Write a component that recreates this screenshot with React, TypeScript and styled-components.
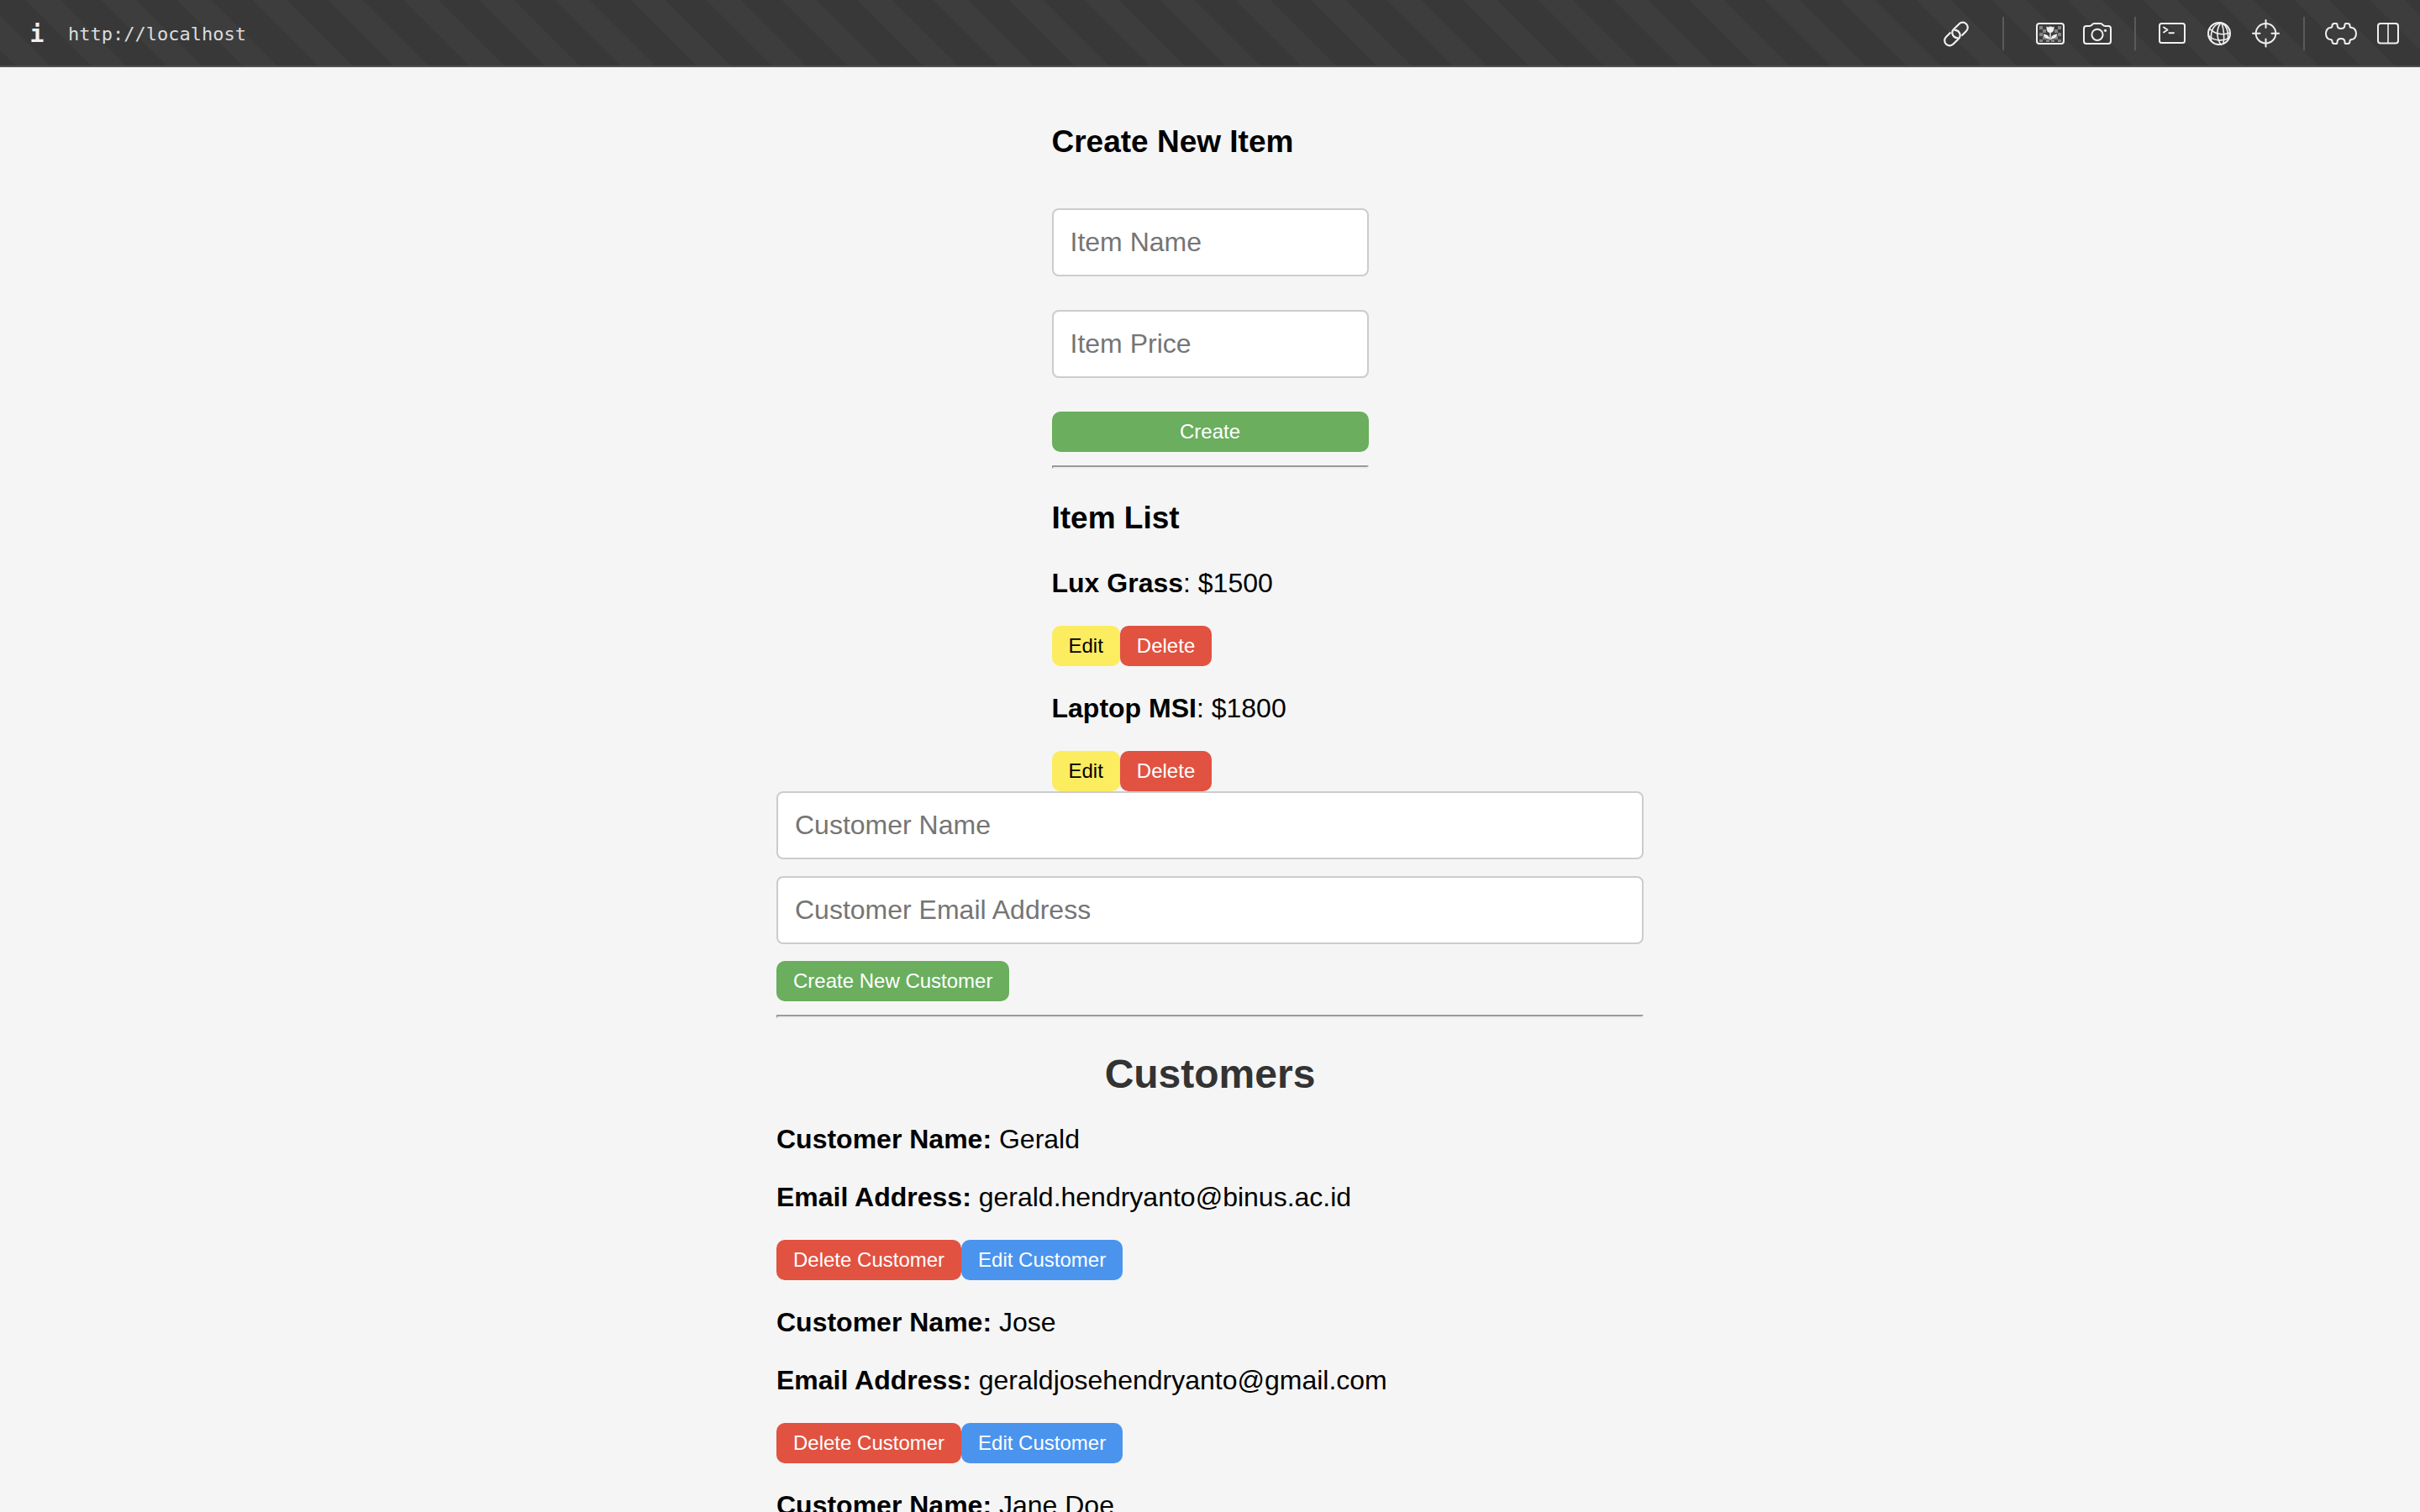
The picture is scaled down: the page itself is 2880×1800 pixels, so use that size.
import React from "react";
import styled, { createGlobalStyle } from "styled-components";

const GlobalStyle = createGlobalStyle`
  *, *::before, *::after { box-sizing: border-box; }
  body {
    margin: 0;
    background: #f5f5f5;
    color: #000;
    font-family: "Liberation Sans", Arial, Helvetica, sans-serif;
    font-size: 32px;
    line-height: 37px;
  }
`;

const Shell = styled.div`
  display: flex;
  flex-direction: column;
  height: 100vh;
  overflow: hidden;
`;

const Toolbar = styled.header`
  display: flex;
  align-items: center;
  flex: none;
  height: 80px;
  padding: 0 10px 0 16px;
  background-color: #383838;
  background-image: linear-gradient(
    45deg,
    #383838 16.67%,
    #3d3d3d 16.67% 40%,
    #383838 40% 66.67%,
    #3d3d3d 66.67% 90%,
    #383838 90%
  );
  background-size: 90px 90px;
  box-shadow: inset 0 -2px #4f4f4f;
`;

const ToolButton = styled.button`
  display: flex;
  align-items: center;
  justify-content: center;
  width: 56px;
  height: 56px;
  padding: 0;
  border: 0;
  background: none;
  color: #f0f0f0;
`;

const InfoButton = styled(ToolButton)`
  font: bold 28px "DejaVu Sans Mono", monospace;
`;

const Address = styled.input`
  flex: 1;
  min-width: 0;
  margin-left: 9px;
  padding: 0;
  border: 0;
  outline: 0;
  background: none;
  color: #dcdcdc;
  font: 22px "DejaVu Sans Mono", monospace;
`;

const Divider = styled.span<{ $wide?: boolean }>`
  width: 2px;
  height: 40px;
  margin: ${(p) => (p.$wide ? "0 27px" : "0 15px 0 16px")};
  background: #5a5a5a;
`;

const Icon = styled.svg.attrs({ viewBox: "0 0 40 40", "aria-hidden": true })`
  width: 40px;
  height: 40px;
  fill: none;
  stroke: currentColor;
  stroke-width: 2;
  stroke-linecap: round;
  stroke-linejoin: round;
`;

const Main = styled.main`
  display: flex;
  flex-direction: column;
  align-items: center;
  flex: 1;
  min-height: 0;
  padding-top: 30px;
  overflow: hidden;
`;

const Items = styled.section`
  flex: none;
  width: 377px;
`;

const Customers = styled.section`
  flex: none;
  width: 100%;
  max-width: 1032px;
`;

const Heading = styled.h3`
  margin: 37px 0 38px;
  font-size: 37px;
  line-height: 43px;
`;

const Title = styled.h1`
  margin: 40px 0 32px;
  color: #333;
  font-size: 48px;
  line-height: 54px;
  text-align: center;
`;

const Form = styled.form<{ $gap: number }>`
  display: flex;
  flex-direction: column;
  align-items: flex-start;
  gap: ${(p) => p.$gap}px;
`;

const ItemForm = styled(Form)`
  align-items: stretch;
  padding-top: 20px;
`;

const Field = styled.input`
  width: 100%;
  padding: 20px;
  border: 2px solid #ccc;
  border-radius: 8px;
  background: #fff;
  color: #000;
  font: inherit;
  line-height: 37px;

  &::placeholder { color: #757575; }
`;

const tones = {
  green: ["#6aae5e", "#fff"],
  yellow: ["#fcec60", "#000"],
  red: ["#e15241", "#fff"],
  blue: ["#4a94ee", "#fff"],
};

const Button = styled.button<{ $tone: keyof typeof tones }>`
  padding: 10px 20px;
  border: 0;
  border-radius: 10px;
  background: ${(p) => tones[p.$tone][0]};
  color: ${(p) => tones[p.$tone][1]};
  font-family: inherit;
  font-size: 24px;
  line-height: 28px;
`;

const Rule = styled.hr`
  margin: 16px 0 0;
  border: 2px inset #eee;
`;

const Line = styled.p`
  margin: 32px 0;
`;

const Actions = styled.div`
  display: flex;
`;

const LinkIcon = () => (
  <Icon>
    <g transform="translate(20 20.5) rotate(-45)" strokeWidth="2.2" strokeLinecap="butt">
      <path d="M-3.2-6H-11a6 6 0 0 0 0 12H-2A6 6 0 0 0 1.600-4.800" />
      <path d="M3.2 6H11a6 6 0 0 0 0-12H2A6 6 0 0 0-1.600 4.800" />
    </g>
  </Icon>
);

const checks = [
  [7, 11], [11, 15], [7, 19], [11, 23], [7, 27], [15, 27],
  [29, 11], [25, 15], [29, 19], [25, 23], [29, 27], [21, 27],
];

const PictureIcon = () => (
  <Icon>
    <rect x="4" y="8" width="32" height="24" rx="3" />
    <g fill="#858585" stroke="none">
      {checks.map(([x, y]) => (
        <rect key={`${x}-${y}`} x={x} y={y} width="4" height={y === 27 ? 3 : 4} />
      ))}
    </g>
    <g fill="currentColor" stroke="none">
      <path d="M15.500 11.500l2.500 1 .8-1.300h.6l.6 1.200.6-1.200h.6l.8 1.300 2.500-1c.2 4.500-1 7.500-4.500 7.500s-4.700-3-4.500-7.500z" />
      <path d="M19.300 18h1.400v9.400h-1.400z" />
      <path d="M11.600 20.600c4 .2 7 2 7.800 5.800-4 .4-7-1.600-7.800-5.800z" />
      <path d="M28.400 20.600c-4 .2-7 2-7.800 5.800 4 .4 7-1.600 7.800-5.800z" />
    </g>
  </Icon>
);

const CameraIcon = () => (
  <Icon>
    <path d="M4 14a3 3 0 0 1 3-3h3.500c1.500 0 2.300-.4 3-1.400S15 8 16.500 8h7c1.500 0 2.300.6 3 1.600s1.500 1.400 3 1.400H33a3 3 0 0 1 3 3v15a3 3 0 0 1-3 3H7a3 3 0 0 1-3-3z" />
    <circle cx="20" cy="21.300" r="6.600" />
    <circle cx="29.500" cy="16.300" r="1.600" fill="currentColor" stroke="none" />
  </Icon>
);

const TerminalIcon = () => (
  <Icon>
    <rect x="5" y="8" width="30" height="23" rx="2.500" />
    <path d="M10 12.500l4.500 3-4.500 3M16.500 19.300h5.500" />
  </Icon>
);

const GlobeIcon = () => (
  <Icon>
    <circle cx="20" cy="20" r="13" />
    <g strokeWidth="1.600">
      <path d="M22 7.200C14 9 9.500 16 10.500 28" />
      <path d="M22 7.200C16.500 14 16.500 25 22 33" />
      <path d="M23 7.200C25.500 15 26.500 23 25 32" />
      <path d="M24 8C28 10 31.500 17 30.500 26" />
      <path d="M9 14.500c6 6 15 8 24 4.500" />
      <path d="M7.500 22.500c6 6 16 7 24 3" />
    </g>
  </Icon>
);

const TargetIcon = () => (
  <Icon>
    <circle cx="19.500" cy="19.700" r="11.800" />
    <path d="M19.500 4v9M19.500 26.500v9M4 19.700h8.500M26.500 19.700H35" />
  </Icon>
);

const PuzzleIcon = () => (
  <Icon>
    <path d="M12 8h2.300c1 0 1.200.8 1.200 1.800 0 2.700 1.500 4.200 4.500 4.200s4.500-1.500 4.500-4.200c0-1 .2-1.800 1.200-1.800H28c1.700 0 2.500 1.200 2.500 2.700S31.500 13 33 13c3.200 0 5 4 5 7s-1.800 7-5 7c-1.500 0-2.500.8-2.500 2.300S29.700 32 28 32h-2.300c-1 0-1.200-.8-1.200-1.800 0-2.700-1.500-4.200-4.500-4.200s-4.500 1.500-4.500 4.200c0 1-.2 1.800-1.200 1.800H12c-1.700 0-2.500-1.200-2.500-2.700S8.500 27 7 27c-3.200 0-5-4-5-7s1.800-7 5-7c1.500 0 2.500-.8 2.500-2.300S10.300 8 12 8z" />
  </Icon>
);

const SplitIcon = () => (
  <Icon>
    <rect x="8" y="8" width="24" height="23.500" rx="3" />
    <path d="M20 8v23.500" strokeWidth="1.600" />
  </Icon>
);

const items = [
  { name: "Lux Grass", price: 1500 },
  { name: "Laptop MSI", price: 1800 },
];

const customers = [
  { name: "Gerald", email: "gerald.hendryanto@binus.ac.id" },
  { name: "Jose", email: "geraldjosehendryanto@gmail.com" },
  { name: "Jane Doe", email: "" },
];

export default function App() {
  return (
    <Shell>
      <GlobalStyle />
      <Toolbar>
        <InfoButton type="button" aria-label="Site information">i</InfoButton>
        <Address aria-label="Address" defaultValue="http://localhost" spellCheck={false} />
        <ToolButton type="button" aria-label="Copy link"><LinkIcon /></ToolButton>
        <Divider $wide />
        <ToolButton type="button" aria-label="Pictures"><PictureIcon /></ToolButton>
        <ToolButton type="button" aria-label="Capture"><CameraIcon /></ToolButton>
        <Divider />
        <ToolButton type="button" aria-label="Console"><TerminalIcon /></ToolButton>
        <ToolButton type="button" aria-label="Network"><GlobeIcon /></ToolButton>
        <ToolButton type="button" aria-label="Inspect"><TargetIcon /></ToolButton>
        <Divider />
        <ToolButton type="button" aria-label="Extensions"><PuzzleIcon /></ToolButton>
        <ToolButton type="button" aria-label="Split view"><SplitIcon /></ToolButton>
      </Toolbar>
      <Main>
        <Items>
          <Heading>Create New Item</Heading>
          <ItemForm $gap={40} onSubmit={(e) => e.preventDefault()}>
            <Field aria-label="Item Name" placeholder="Item Name" />
            <Field aria-label="Item Price" placeholder="Item Price" />
            <Button $tone="green">Create</Button>
          </ItemForm>
          <Rule />
          <Heading>Item List</Heading>
          {items.map((item) => (
            <article key={item.name}>
              <Line><strong>{item.name}</strong>: ${item.price}</Line>
              <Actions>
                <Button type="button" $tone="yellow">Edit</Button>
                <Button type="button" $tone="red">Delete</Button>
              </Actions>
            </article>
          ))}
        </Items>
        <Customers>
          <Form $gap={20} onSubmit={(e) => e.preventDefault()}>
            <Field aria-label="Customer Name" placeholder="Customer Name" />
            <Field aria-label="Customer Email Address" placeholder="Customer Email Address" />
            <Button $tone="green">Create New Customer</Button>
          </Form>
          <Rule />
          <Title>Customers</Title>
          {customers.map((customer) => (
            <article key={customer.name}>
              <Line><strong>Customer Name:</strong> {customer.name}</Line>
              {customer.email && (
                <>
                  <Line><strong>Email Address:</strong> {customer.email}</Line>
                  <Actions>
                    <Button type="button" $tone="red">Delete Customer</Button>
                    <Button type="button" $tone="blue">Edit Customer</Button>
                  </Actions>
                </>
              )}
            </article>
          ))}
        </Customers>
      </Main>
    </Shell>
  );
}
